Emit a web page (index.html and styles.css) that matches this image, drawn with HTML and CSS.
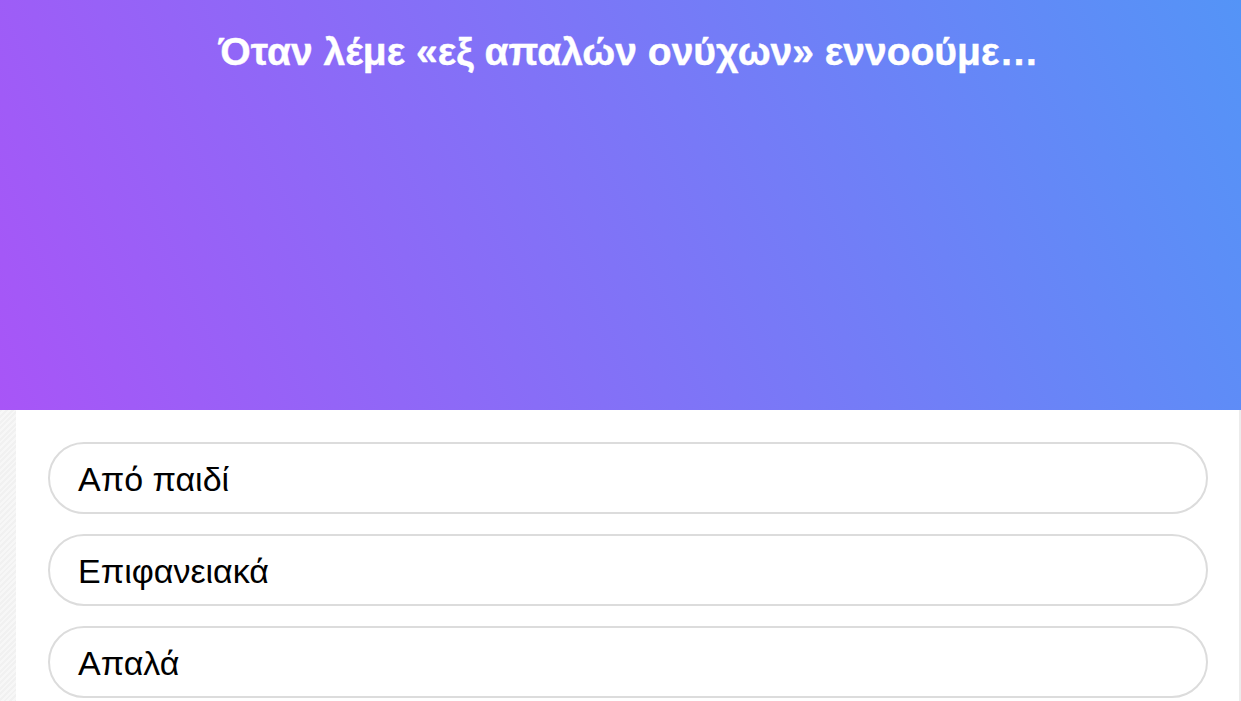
FILE: index.html
```html
<!DOCTYPE html>
<html lang="el">
<head>
  <meta charset="UTF-8">
  <meta name="viewport" content="width=device-width, initial-scale=1.0">
  <title>Κουίζ εκφράσεων</title>
  <link rel="stylesheet" href="styles.css">
</head>
<body>
  <div class="question">
    <h1>Όταν λέμε «εξ απαλών ονύχων» εννοούμε…</h1>
  </div>

  <div class="stage">
    <div class="answers">
      <button class="answer">Από παιδί</button>
      <button class="answer">Επιφανειακά</button>
      <button class="answer">Απαλά</button>
    </div>
  </div>
</body>
</html>
```

FILE: styles.css
```css
html, body { margin: 0; padding: 0; height: 100%; }
body { font-family: "Liberation Sans", Arial, sans-serif; background: #fff; overflow: hidden; }
.question { height: 410px; box-sizing: border-box; padding: 27px 0 0 16px; background: linear-gradient(67deg, #a855f7, #5494f7); }
h1 { margin: 0; text-align: center; color: white; font-size: 39px; font-weight: bold; line-height: 50px; -webkit-text-stroke: 0.4px white; }
.stage { height: calc(100% - 410px); padding-left: 16px; background: repeating-linear-gradient(135deg, #f1f1f1 0 2px, #f7f7f7 2px 4px); }
.answers { height: 100%; box-sizing: border-box; background: white; border-right: 2px solid #ececec; padding: 32px 31px 0 32px; display: flex; flex-direction: column; gap: 20px; }
.answer { height: 72px; flex-shrink: 0; box-sizing: border-box; border: 2px solid #dcdcdc; border-radius: 40px; background: white; text-align: left; padding: 2px 28px 0; font-family: inherit; font-size: 34px; color: #000; cursor: pointer; }
.answer:hover { background: #f7f7f7; }
```
